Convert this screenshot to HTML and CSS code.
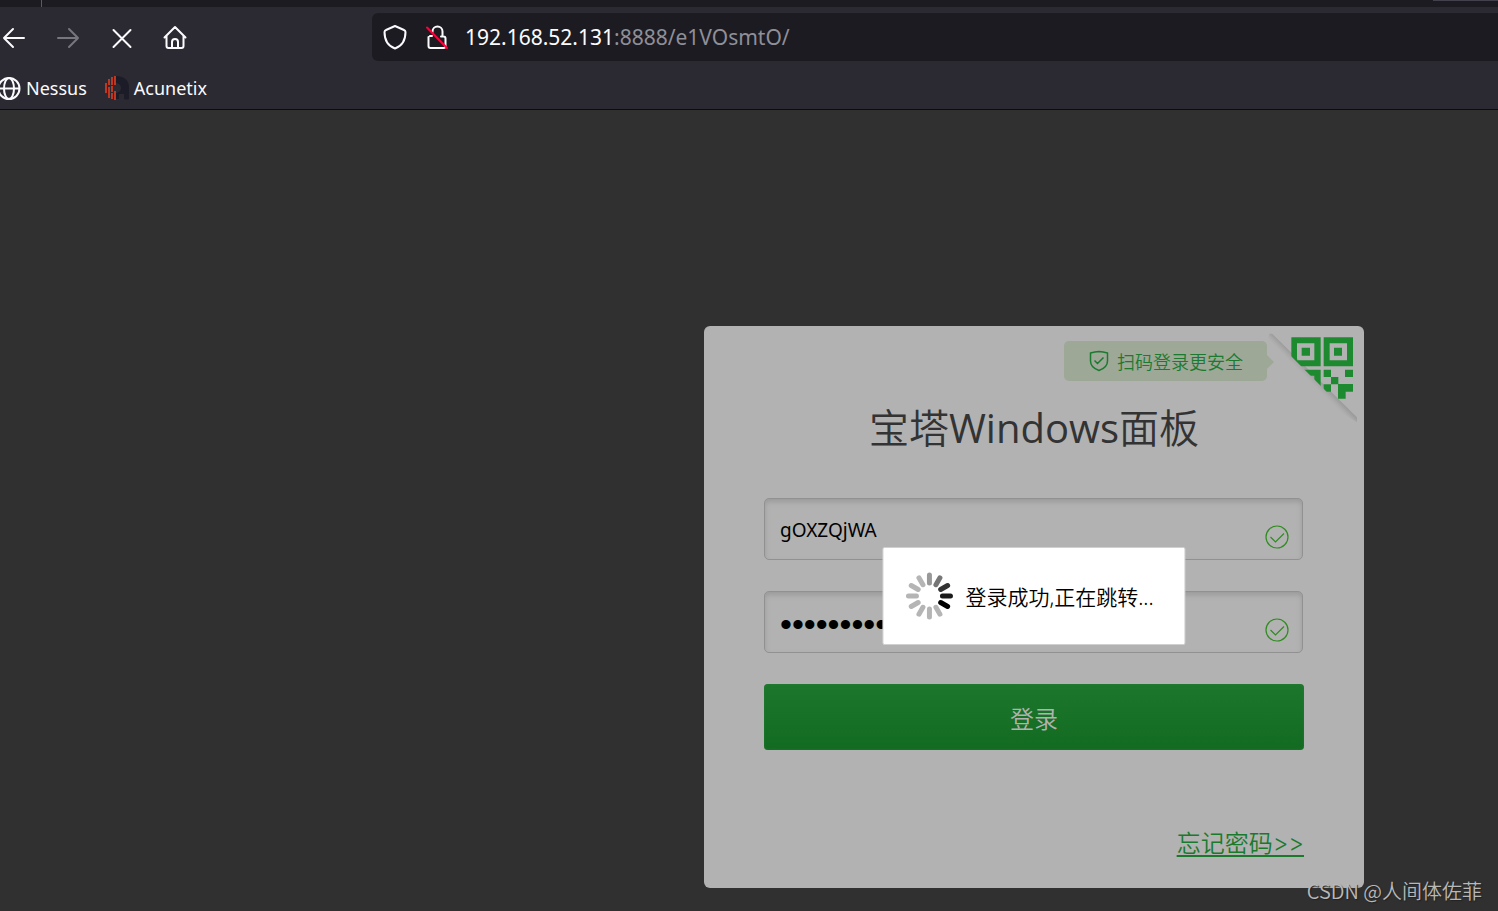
FILE: index.html
```html
<!DOCTYPE html>
<html lang="zh-CN">
<head>
<meta charset="utf-8">
<title>宝塔Windows面板</title>
<link rel="stylesheet" href="styles.css">
</head>
<body>
<header class="browser">
  <div class="tabs"><span class="tab-edge"></span><span class="tab-tip"></span></div>
  <div class="toolbar">
    <nav class="nav" aria-label="Navigation">
      <button class="nav-btn" aria-label="Back"><svg viewBox="0 0 28 28"><path d="M24 15H4M13 6l-9 9 9 9"/></svg></button>
      <button class="nav-btn dim" aria-label="Forward"><svg viewBox="0 0 28 28"><path d="M4 15h20M15 6l9 9-9 9"/></svg></button>
      <button class="nav-btn" aria-label="Stop"><svg viewBox="0 0 28 28"><path d="M5.500 7l17 17M22.500 7L5.500 24"/></svg></button>
      <button class="nav-btn" aria-label="Home"><svg viewBox="0 0 28 28"><path d="M2.500 14.500L13 4 23.500 14.500M4.500 13V23q0 2 2 2h13q2 0 2-2V13M10 25v-6q0-3 3-3t3 3v6"/></svg></button>
    </nav>
    <div class="urlbar">
      <svg class="url-icon" viewBox="0 0 28 28"><path d="M14 3l9 4q1.500.600 1.500 2c0 8-3.500 14-10.500 16.500C7 23 3.500 17 3.500 9q0-1.400 1.500-2z"/></svg>
      <svg class="url-icon" viewBox="0 0 28 28"><path d="M9.500 9V8.500a5 5 0 0 1 10 0V13M5.500 14v9q0 2 2 2h13q2 0 2-2v-7.500q0-2-2-2H18M9 13H7"/><path class="slash" d="M4 4.500L24 25"/></svg>
      <p class="url">192.168.52.131<span class="path">:8888/e1VOsmtO/</span></p>
    </div>
  </div>
  <nav class="bookmarks" aria-label="Bookmarks">
    <a href="#nessus" class="bookmark"><svg viewBox="0 0 24 24"><circle cx="12" cy="12.500" r="10.500"/><ellipse cx="12" cy="12.500" rx="5" ry="10.500"/><path d="M1.500 12.500h21"/></svg>Nessus</a>
    <a href="#acunetix" class="bookmark"><svg viewBox="0 0 24 24"><path class="arch" d="M11 0c8 0 13 4 13 11v12q-3 1-5 0v-5h-5v5h-3v-6a5 5 0 0 0 0-10z"/><path class="bars" d="M1 7v10M4 3v6M4 11v11M7 1v8M7 10v6M7 17v6M10 0v9M10 15v9"/></svg>Acunetix</a>
  </nav>
</header>
<main class="page">
  <section class="card">
    <div class="card-top">
      <p class="scan-tip"><svg viewBox="0 0 20 22"><path d="M10 1.500q4 .200 8.500 1.500v8q0 6.500-8.500 9.500Q1.500 17.500 1.500 11V3Q6 1.700 10 1.500zM5.500 10.500l3 3 6-6"/></svg>扫码登录更安全</p>
      <a class="qr" href="#scan" aria-label="扫码登录"><svg viewBox="54 38 270 276">
        <defs>
          <linearGradient id="fold" gradientUnits="userSpaceOnUse" x1="195" y1="171" x2="178" y2="188"><stop offset="0" stop-color="#888" stop-opacity=".5"/><stop offset="1" stop-color="#b2b2b2" stop-opacity="0"/></linearGradient>
          <clipPath id="corner"><path d="M54 38H324V309z"/></clipPath>
        </defs>
        <path fill="url(#fold)" d="M58 40H76L321 285V306L270 275 54 54z"/>
        <path fill="#b2b2b2" d="M64 38H324V294z"/>
        <g clip-path="url(#corner)" fill="#1e8a2f">
          <path fill-rule="evenodd" d="M124 51h88v87h-88zM141 69v51h52V69zM221 51h88v87h-88zM239 69v51h52V69zM124 148h88v87h-88zM141 166v51h52v-51z"/>
          <path d="M155 82h25v24h-25zM252 82h24v24h-24zM221 148h22v22h22v22h-22v22h-22v-22h22v-22h-22zM285 148h24v22h-24zM264 191h45v23h-22v21h-23z"/>
        </g>
      </svg></a>
    </div>
    <h1 class="title">宝塔<span class="latin">Windows</span>面板</h1>
    <form class="form">
      <div class="field"><input class="text" type="text" aria-label="用户名" value="gOXZQjWA"><svg class="ok" viewBox="0 0 24 24"><circle cx="12" cy="12" r="11"/><path d="M5.500 12l5 5L19 8.500"/></svg></div>
      <div class="field"><input class="text password" type="password" aria-label="密码" value="1234567890"><svg class="ok" viewBox="0 0 24 24"><circle cx="12" cy="12" r="11"/><path d="M5.500 12l5 5L19 8.500"/></svg></div>
      <button class="login" type="button">登录</button>
    </form>
    <a class="forgot" href="#forgot">忘记密码&gt;&gt;</a>
    <div class="toast" role="status">
      <svg class="spinner" viewBox="-24 -24 48 48">
        <path stroke="#999" d="M0-21v8"/><path stroke="#777" d="M0-21v8" transform="rotate(30)"/><path stroke="#333" d="M0-21v8" transform="rotate(60)"/><path stroke="#1a1a1a" d="M0-21v8" transform="rotate(90)"/><path stroke="#000" d="M0-21v8" transform="rotate(120)"/>
        <g stroke="#b5b5b5"><path d="M0-21v8" transform="rotate(150)"/><path d="M0-21v8" transform="rotate(180)"/><path d="M0-21v8" transform="rotate(210)"/><path d="M0-21v8" transform="rotate(240)"/><path d="M0-21v8" transform="rotate(270)"/><path d="M0-21v8" transform="rotate(300)"/><path d="M0-21v8" transform="rotate(330)"/></g>
      </svg>
      <span>登录成功,正在跳转...</span>
    </div>
  </section>
  <p class="watermark">CSDN @人间体佐菲</p>
</main>
</body>
</html>
```
FILE: styles.css
```css
* { box-sizing: border-box; }
body {
  margin: 0;
  min-height: 100vh;
  display: flex;
  flex-direction: column;
  background: #303030;
  font-family: "Noto Sans", "Noto Sans CJK SC", sans-serif;
}
p, h1 { margin: 0; }
svg { display: block; flex: none; }

.browser { background: #2b2a33; border-bottom: 1px solid #0c0c0d; color: #fbfbfe; }
.tabs { display: flex; justify-content: space-between; height: 7px; background: #1c1b22; }
.tab-edge { width: 42px; border-right: 1px solid #5b5b66; }
.tab-tip { width: 65px; height: 1px; background: #42414d; }
.toolbar { display: flex; align-items: center; padding-top: 6px; }
.nav { display: flex; gap: 26px; width: 372px; }
.nav-btn { width: 28px; height: 28px; padding: 0; border: 0; background: none; color: #fbfbfe; }
.nav-btn svg { width: 28px; height: 28px; }
.nav-btn path, .url-icon path { fill: none; stroke: currentColor; stroke-width: 2; stroke-linecap: round; stroke-linejoin: round; }
.dim { color: #77767e; }
.urlbar {
  flex: 1;
  display: flex;
  align-items: center;
  gap: 14px;
  height: 48px;
  padding-left: 9px;
  border-radius: 6px 0 0 6px;
  background: #1c1b22;
}
.url-icon { width: 28px; height: 28px; }
.url-icon .slash { stroke: #ff0039; }
.url { font-size: 21px; line-height: 30px; white-space: nowrap; }
.path { color: #8f8f98; }
.bookmarks { display: flex; gap: 18px; height: 48px; align-items: center; }
.bookmark { display: flex; align-items: center; gap: 5px; color: inherit; font-size: 18px; line-height: 24px; text-decoration: none; padding-top: 6px; }
.bookmark svg { width: 24px; height: 24px; fill: none; stroke: #fbfbfe; stroke-width: 2; }
.bookmark:first-child svg { margin-left: -3px; }
.bookmark .arch { fill: #1c1c28; stroke: none; }
.bookmark .bars { stroke: #f03e1c; stroke-width: 1.500; }

.page { flex: 1; position: relative; display: flex; justify-content: flex-end; align-items: flex-start; padding: 216px 134px 23px; }
.card {
  position: relative;
  display: flex;
  flex-direction: column;
  width: 660px;
  padding: 7px 60px 26px;
  border-radius: 6px;
  background: #b2b2b2;
}
.card-top { display: flex; justify-content: flex-end; align-items: flex-start; gap: 1px; height: 67px; margin-right: -54px; }
.scan-tip {
  position: relative;
  display: flex;
  align-items: center;
  gap: 8px;
  height: 40px;
  margin-top: 8px;
  padding: 0 24px 1px 25px;
  border-radius: 5px;
  background: #9da897;
  color: #1c7a30;
  font-size: 18px;
  font-family: "Noto Sans CJK SC", sans-serif;
  font-weight: 350;
}
.scan-tip::after { content: ""; position: absolute; left: 100%; top: 14px; border: 7px solid transparent; border-right: 0; border-left-color: #9da897; }
.scan-tip svg { width: 20px; height: 22px; fill: none; stroke: #1c7a30; stroke-width: 1.500; }
.qr svg { width: 90px; height: 92px; }
.title { color: #333; font-size: 40px; line-height: 56px; font-weight: 350; text-align: center; }
.title .latin { font-family: "Open Sans", sans-serif; font-weight: 400; }
.form { display: flex; flex-direction: column; gap: 31px; margin-top: 42px; }
.field { position: relative; display: flex; margin-right: 1px; }
.text {
  flex: 1;
  min-width: 0;
  height: 62px;
  padding: 1px 48px 0 15px;
  border: 1px solid #919191;
  border-radius: 5px;
  background: #b2b2b2;
  box-shadow: inset 0 3px 5px #9b9b9b;
  color: #000;
  font-family: "Noto Sans", sans-serif;
  font-size: 19px;
}
.password { padding-top: 4px; font-family: "Liberation Sans", sans-serif; font-size: 34px; }
.ok { position: absolute; right: 14px; bottom: 11px; width: 24px; height: 24px; fill: none; stroke: #2f8c20; stroke-width: 1.200; }
.login {
  height: 66px;
  padding: 2px 0 0;
  border: 0;
  border-radius: 4px;
  background: linear-gradient(#1c772c, #126b21);
  box-shadow: inset 0 0 3px #247a32;
  color: #b2b2b2;
  font: 350 24px/36px "Noto Sans CJK SC", sans-serif;
}
.forgot { align-self: flex-end; margin-top: 76px; color: #1a7a2c; font-family: "Inter", "Noto Sans CJK SC", sans-serif; font-size: 24px; line-height: 36px; font-weight: 350; text-underline-offset: 3px; text-decoration-thickness: 2px; }
.toast {
  position: absolute;
  top: 221px;
  left: 50%;
  transform: translateX(-50%);
  display: flex;
  align-items: center;
  gap: 12px;
  height: 98px;
  padding: 0 31px 0 22px;
  border: 1px solid #d0d0d0;
  border-radius: 2px;
  background: #fff;
  color: #000;
  font-size: 21px;
  font-weight: 350;
  line-height: 30px;
  white-space: nowrap;
}
.toast span { padding-top: 2px; }
.spinner { width: 48px; height: 48px; stroke-width: 5; stroke-linecap: round; }
.watermark { position: absolute; right: 16px; bottom: 5px; color: #b8b8b8; font-family: "Noto Sans CJK SC", sans-serif; font-size: 20px; line-height: 30px; font-weight: 350; text-shadow: 1px 1px 1px #222; }
```
